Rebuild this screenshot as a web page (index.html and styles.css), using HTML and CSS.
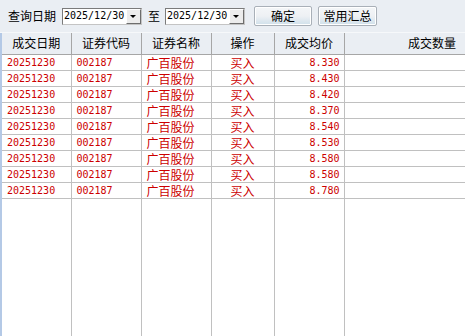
FILE: index.html
```html
<!DOCTYPE html>
<html lang="zh">

<head>
  <meta charset="UTF-8">
  <title>成交查询</title>
  <link rel="stylesheet" href="styles.css">
</head>

<body>
  <div class="toolbar">
    <span class="label">查询日期</span>
    <div class="datebox"><span class="num">2025/12/30</span><i class="drop"></i></div>
    <span class="label to">至</span>
    <div class="datebox"><span class="num">2025/12/30</span><i class="drop"></i></div>
    <button type="button" class="ok">确定</button>
    <button type="button">常用汇总</button>
  </div>
  <div class="grid">
    <table>
      <colgroup>
        <col class="c1">
        <col class="c2">
        <col class="c3">
        <col class="c4">
        <col class="c5">
        <col>
      </colgroup>
      <thead>
        <tr>
          <th>成交日期</th>
          <th>证券代码</th>
          <th>证券名称</th>
          <th>操作</th>
          <th>成交均价</th>
          <th class="last">成交数量</th>
        </tr>
      </thead>
      <tbody id="rows"></tbody>
    </table>
  </div>
  <script>
    const prices = ['8.330', '8.430', '8.420', '8.370', '8.540', '8.530', '8.580', '8.580', '8.780']
    const tbody = document.querySelector('#rows')

    prices.forEach(price => {
      const row = document.createElement('tr')
      row.innerHTML = `
        <td class="num">20251230</td>
        <td class="num">002187</td>
        <td>广百股份</td>
        <td class="op">买入</td>
        <td class="num price">${price}</td>
        <td></td>`
      tbody.append(row)
    })

    // empty row stretches the column lines to the bottom
    const filler = document.createElement('tr')
    filler.className = 'filler'
    filler.innerHTML = '<td></td>'.repeat(6)
    tbody.append(filler)
  </script>
</body>

</html>
```

FILE: styles.css
```css
* {
  box-sizing: border-box;
}

html,
body {
  height: 100%;
}

body {
  margin: 0;
  display: flex;
  flex-direction: column;
  font-family: "Noto Sans CJK SC", "DejaVu Sans", sans-serif;
  font-size: 12px;
  line-height: 1;
  color: #000;
  background: #fff;
  overflow: hidden;
}

.num {
  font-family: "DejaVu Sans Mono", "Liberation Mono", monospace;
  font-size: 10px;
}

.toolbar {
  height: 33px;
  flex: none;
  display: flex;
  align-items: center;
  padding-left: 8px;
  background: #eaeef3;
  border-bottom: 1px solid #f6f8fa;
}

.label {
  margin-right: 6px;
}

.label.to {
  margin: 0 5px 0 6px;
}

.datebox {
  width: 80px;
  height: 17px;
  display: flex;
  align-items: center;
  border: 1px solid #7b7b7b;
  border-right-color: #c4c4c4;
  border-bottom-color: #c4c4c4;
  background: #fff;
  padding-left: 1px;
}

.datebox .num {
  flex: 1;
}

.drop {
  width: 15px;
  height: 15px;
  position: relative;
  background: #ececec;
  border: 1px solid #fff;
  border-right-color: #6d6d6d;
  border-bottom-color: #6d6d6d;
}

.drop::after {
  content: '';
  position: absolute;
  left: 3px;
  top: 5px;
  border-left: 3px solid transparent;
  border-right: 3px solid transparent;
  border-top: 3px solid #000;
}

button {
  height: 20px;
  width: 59px;
  margin-left: 6px;
  padding: 0;
  font: inherit;
  color: #000;
  border: 1px solid #a9b0b8;
  border-radius: 2px;
  background: linear-gradient(#f4f6f8 0%, #eef1f4 50%, #dbe6ee 80%, #cfe0ea 100%);
  box-shadow: inset 0 0 0 1px #fff;
}

button.ok {
  width: 58px;
  margin-left: 9px;
}

.grid {
  flex: 1;
  border-left: 2px solid #b4c9e6;
}

table {
  width: 100%;
  height: 100%;
  table-layout: fixed;
  border-collapse: collapse;
}

.c1 {
  width: 69px;
}

.c2,
.c3,
.c5 {
  width: 70px;
}

.c4 {
  width: 63px;
}

th {
  height: 21px;
  font-weight: 400;
  background: #eaeef3;
  border-right: 1px solid #a6a6a6;
  border-bottom: 1px solid #a6a6a6;
  text-align: center;
  padding: 0;
}

th.last {
  text-align: right;
  padding-right: 9px;
  border-right: none;
}

td {
  height: 16px;
  padding: 1px 0 0 5px;
  color: #cc0000;
  border-right: 1px solid #c0c0c0;
  border-bottom: 1px solid #c0c0c0;
  white-space: nowrap;
}

td:nth-child(3) {
  padding-left: 5px;
}

td.op {
  text-align: center;
  padding: 1px 0 0;
}

td.price {
  text-align: right;
  padding: 1px 4px 0 0;
}

td:last-child {
  border-right: none;
}

.filler td {
  height: auto;
  border-bottom: none;
}
```
